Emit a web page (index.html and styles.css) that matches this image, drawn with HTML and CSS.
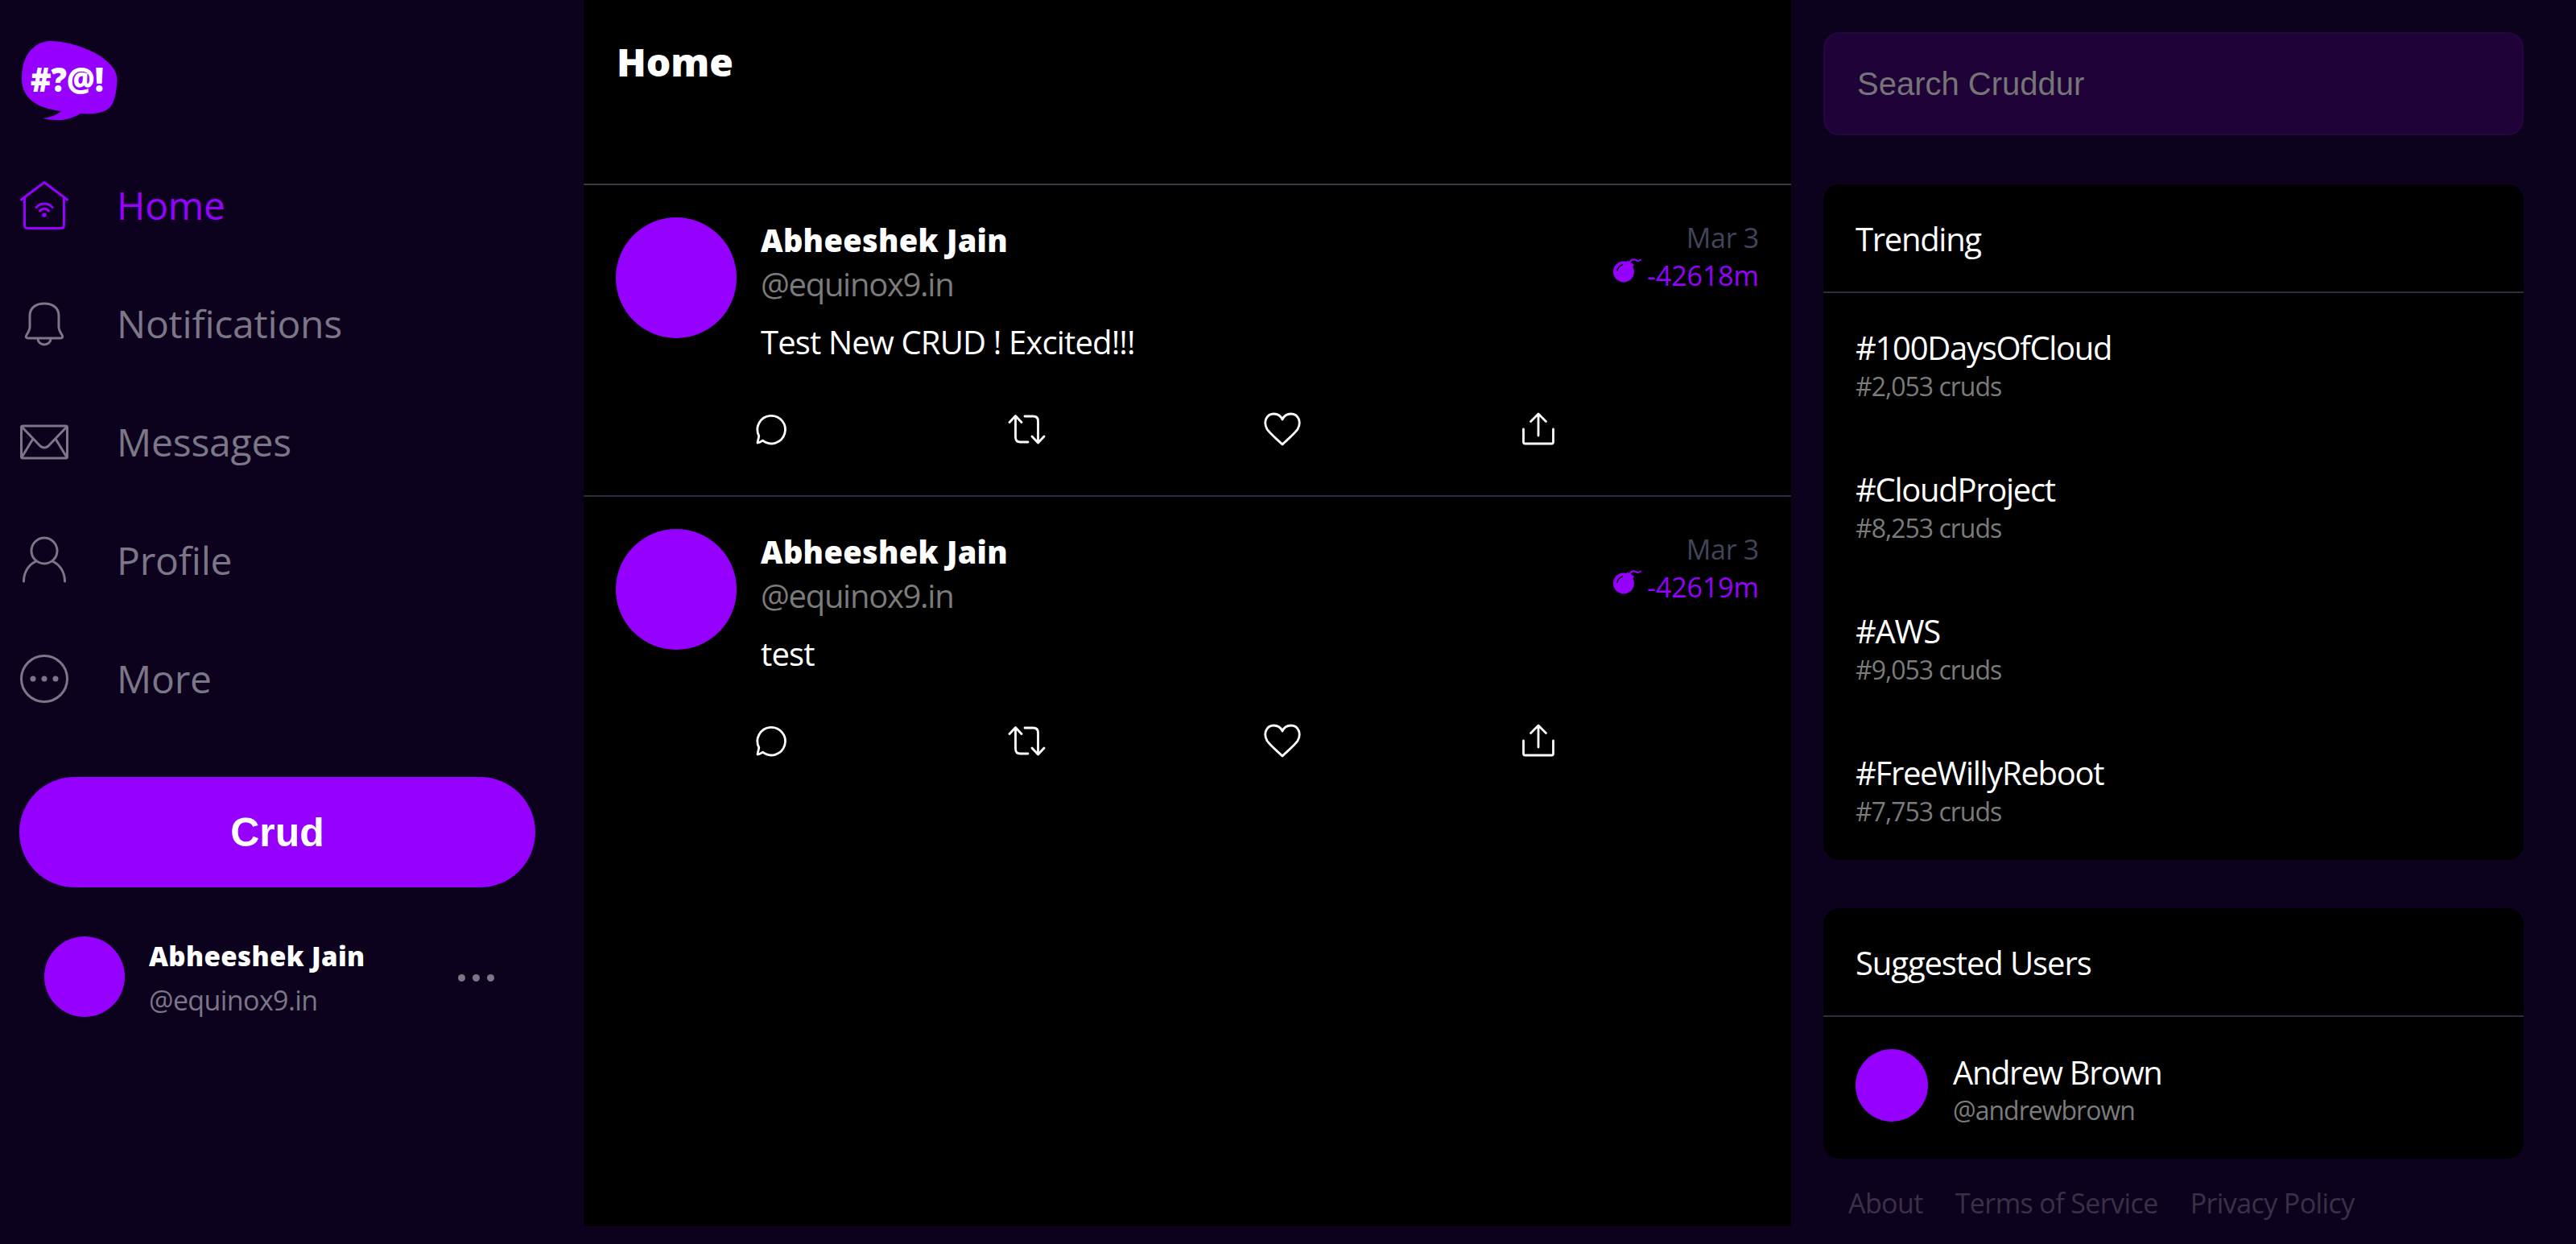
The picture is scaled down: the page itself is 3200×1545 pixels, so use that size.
FILE: index.html
```html
<!DOCTYPE html>
<html lang="en">
<head>
<meta charset="utf-8">
<title>Cruddur</title>
<link rel="stylesheet" href="styles.css">
</head>
<body>
<div class="app">
  <aside class="sidebar">
    <svg class="logo" viewBox="26 50 120 100">
      <path class="fill-purple" d="M63 51C85 51 115 62 128 72C140 81 146 90 145.5 100C145 112 143 122 140 128C136 137 125 143 100 141C92 146 80 150 70 149C63 149 58 148 53 147C62 146 70 143 76 138C60 136 47 132 38 124C30 116 27 108 27 97C27 80 32 66 43 58C49 53 56 51 63 51Z"/>
      <text class="logo-text" x="38" y="114" textLength="91" lengthAdjust="spacingAndGlyphs">#?@!</text>
    </svg>
    <nav class="nav">
      <a class="nav-item active">
        <svg class="nav-icon" viewBox="0 0 60 60"><path d="M1.5 23L30 1.5L58.5 23M5.5 20V54.500Q5.500 58.500 9.500 58.500H50.500Q54.500 58.500 54.500 54.500V20"/><path d="M20 32.500A13.500 13.500 0 0 1 40 32.500M24.500 37A7 7 0 0 1 35.500 37"/><circle class="dot" cx="30" cy="42" r="2.800"/></svg>
        <span>Home</span>
      </a>
      <a class="nav-item">
        <svg class="nav-icon" viewBox="0 0 60 60"><path d="M12 20C12 10 20 5 30 5C40 5 48 10 48 20V34C48 38 50 41 52 44Q54 48 50 48H10Q6 48 8 44C10 41 12 38 12 34Z"/><path d="M22 49A8 7 0 0 0 38 49"/></svg>
        <span>Notifications</span>
      </a>
      <a class="nav-item">
        <svg class="nav-icon" viewBox="0 0 60 60"><rect x="1.500" y="10" width="57" height="40" rx="2"/><path d="M2 11L25 35Q30 39 35 35L58 11M2 49L16 26M58 49L44 26"/></svg>
        <span>Messages</span>
      </a>
      <a class="nav-item">
        <svg class="nav-icon" viewBox="0 0 60 60"><circle cx="30" cy="18" r="16"/><path d="M4.500 56C4.500 44 11 35 20 31M55.500 56C55.500 44 49 35 40 31"/></svg>
        <span>Profile</span>
      </a>
      <a class="nav-item">
        <svg class="nav-icon" viewBox="0 0 60 60"><circle cx="30" cy="30" r="28.500"/><circle class="dot" cx="16" cy="30" r="3.500"/><circle class="dot" cx="30" cy="30" r="3.500"/><circle class="dot" cx="44" cy="30" r="3.500"/></svg>
        <span>More</span>
      </a>
    </nav>
    <button class="crud-button">Crud</button>
    <div class="profile">
      <div class="avatar avatar-side"></div>
      <div class="profile-meta">
        <div class="profile-name">Abheeshek Jain</div>
        <div class="profile-handle">@equinox9.in</div>
      </div>
      <div class="profile-dots"><i></i><i></i><i></i></div>
    </div>
  </aside>

  <main class="feed">
    <header class="feed-header">Home</header>

    <article class="post">
      <div class="avatar avatar-post"></div>
      <div class="post-body">
        <div class="post-top">
          <div>
            <div class="post-name">Abheeshek Jain</div>
            <div class="post-handle">@equinox9.in</div>
          </div>
          <div class="post-time">
            <div class="post-date">Mar 3</div>
            <div class="post-expire">
              <svg class="bomb" viewBox="0 0 35 30"><path class="fill-purple" d="M18 2.500L26 8L24.500 10.500A13 13 0 1 1 16.500 4Z"/><path class="bomb-shine" d="M5 16C5 12 8 9 12 7.500"/><path class="bomb-fuse" d="M21 4C23 0.500 27 1.500 29 2.500C31 3.500 33 2.500 34.500 1.500"/></svg>
              <span>-42618m</span>
            </div>
          </div>
        </div>
        <p class="post-text">Test New CRUD ! Excited!!!</p>
        <div class="post-actions">
          <svg class="action" viewBox="0 0 48 48"><path d="M8 41L9.800 32.500A17.300 17.300 0 1 1 14.500 38.200Q10.500 41 8 41Z"/></svg>
          <svg class="action" viewBox="0 0 48 48"><path d="M3 15.500L10.500 7.500L18 15.500M10.500 8V34Q10.500 40 16.500 40H26M46 33L38.500 41L31 33M38.500 40V14Q38.500 8 32.500 8H22"/></svg>
          <svg class="action" viewBox="0 0 48 48"><path d="M24 43C18 37 9 30 5 24C0 15 4 5 13.500 5C18 5 22 7.500 24 12C26 7.500 30 5 34.500 5C44 5 48 15 43 24C39 30 30 37 24 43Z"/></svg>
          <svg class="action" viewBox="0 0 48 48"><path d="M24 32V5.500M14.500 14.500L24 5L33.500 14.500M5.500 24V40Q5.500 42 7.500 42H40.500Q42.500 42 42.500 40V24"/></svg>
        </div>
      </div>
    </article>

    <article class="post">
      <div class="avatar avatar-post"></div>
      <div class="post-body">
        <div class="post-top">
          <div>
            <div class="post-name">Abheeshek Jain</div>
            <div class="post-handle">@equinox9.in</div>
          </div>
          <div class="post-time">
            <div class="post-date">Mar 3</div>
            <div class="post-expire">
              <svg class="bomb" viewBox="0 0 35 30"><path class="fill-purple" d="M18 2.500L26 8L24.500 10.500A13 13 0 1 1 16.500 4Z"/><path class="bomb-shine" d="M5 16C5 12 8 9 12 7.500"/><path class="bomb-fuse" d="M21 4C23 0.500 27 1.500 29 2.500C31 3.500 33 2.500 34.500 1.500"/></svg>
              <span>-42619m</span>
            </div>
          </div>
        </div>
        <p class="post-text">test</p>
        <div class="post-actions">
          <svg class="action" viewBox="0 0 48 48"><path d="M8 41L9.800 32.500A17.300 17.300 0 1 1 14.500 38.200Q10.500 41 8 41Z"/></svg>
          <svg class="action" viewBox="0 0 48 48"><path d="M3 15.500L10.500 7.500L18 15.500M10.500 8V34Q10.500 40 16.500 40H26M46 33L38.500 41L31 33M38.500 40V14Q38.500 8 32.500 8H22"/></svg>
          <svg class="action" viewBox="0 0 48 48"><path d="M24 43C18 37 9 30 5 24C0 15 4 5 13.500 5C18 5 22 7.500 24 12C26 7.500 30 5 34.500 5C44 5 48 15 43 24C39 30 30 37 24 43Z"/></svg>
          <svg class="action" viewBox="0 0 48 48"><path d="M24 32V5.500M14.500 14.500L24 5L33.500 14.500M5.500 24V40Q5.500 42 7.500 42H40.500Q42.500 42 42.500 40V24"/></svg>
        </div>
      </div>
    </article>
  </main>

  <aside class="widgets">
    <input class="search" type="text" placeholder="Search Cruddur">
    <section class="panel panel-trending">
      <h2 class="panel-title">Trending</h2>
      <div class="trend-list">
        <div class="trend"><div class="trend-tag">#100DaysOfCloud</div><div class="trend-count">#2,053 cruds</div></div>
        <div class="trend"><div class="trend-tag">#CloudProject</div><div class="trend-count">#8,253 cruds</div></div>
        <div class="trend"><div class="trend-tag">#AWS</div><div class="trend-count">#9,053 cruds</div></div>
        <div class="trend"><div class="trend-tag">#FreeWillyReboot</div><div class="trend-count">#7,753 cruds</div></div>
      </div>
    </section>
    <section class="panel panel-suggested">
      <h2 class="panel-title">Suggested Users</h2>
      <div class="suggested">
        <div class="avatar avatar-suggest"></div>
        <div class="suggest-meta">
          <div class="suggest-name">Andrew Brown</div>
          <div class="suggest-handle">@andrewbrown</div>
        </div>
      </div>
    </section>
    <footer class="links"><a>About</a><a>Terms of Service</a><a>Privacy Policy</a></footer>
  </aside>
</div>
</body>
</html>
```

FILE: styles.css
```css
* { box-sizing: border-box; }
html, body { margin: 0; background: #0c021e; }
body { font-family: "Open Sans", "Noto Sans", sans-serif; color: #fff; }
.app { display: flex; height: 1523px; }
.fill-purple { fill: #9500ff; }
.avatar { background: #9500ff; border-radius: 50%; flex: none; }

/* sidebar */
.sidebar { width: 725px; flex: none; padding: 50px 0 0 24px; }
.logo { display: block; width: 120px; height: 100px; margin-left: 2px; }
.logo-text { font-family: "Noto Sans", sans-serif; font-weight: 900; font-size: 42px; fill: #fff; }
.nav { margin-top: 31px; display: flex; flex-direction: column; }
.nav-item { display: flex; align-items: center; height: 147px; gap: 60px; color: #7c7786; font-size: 48px; letter-spacing: -0.2px; }
.nav-item.active { color: #9500ff; }
.nav-icon { width: 60px; height: 60px; margin-left: 1px; fill: none; stroke: currentColor; stroke-width: 3; stroke-linecap: round; stroke-linejoin: round; }
.nav-icon .dot { fill: currentColor; stroke: none; }
.crud-button { display: block; width: 641px; height: 137px; margin-top: 49px; border: 0; border-radius: 69px; background: #9500ff; color: #fff; font-family: "Liberation Sans", Arial, sans-serif; font-weight: 700; font-size: 50px; }
.profile { display: flex; align-items: flex-start; margin: 61px 0 0 31px; width: 569px; }
.avatar-side { width: 100px; height: 100px; }
.profile-meta { margin-left: 30px; flex: 1; }
.profile-name { font-family: "Noto Sans", sans-serif; font-weight: 900; font-size: 33px; line-height: 50px; letter-spacing: 0.4px; }
.profile-handle { color: #7c7786; font-size: 34px; line-height: 58px; letter-spacing: -0.6px; }
.profile-dots { display: flex; gap: 9px; margin: 47px 10px 0 0; }
.profile-dots i { width: 9px; height: 9px; border-radius: 50%; background: #7c7786; }

/* feed */
.feed { width: 1500px; flex: none; background: #000; }
.feed-header { height: 230px; padding: 44px 0 0 41px; border-bottom: 2px solid #3a3a48; font-family: "Noto Sans", sans-serif; font-weight: 900; font-size: 48px; line-height: 66px; }
.post { display: flex; gap: 30px; height: 387px; padding: 40px 40px 0; border-bottom: 2px solid #2b2e3c; }
.post:last-child { border-bottom: 0; }
.avatar-post { width: 150px; height: 150px; }
.post-body { flex: 1; min-width: 0; }
.post-top { display: flex; justify-content: space-between; }
.post-name { font-family: "Noto Sans", sans-serif; font-weight: 900; font-size: 38px; line-height: 56px; letter-spacing: 0.3px; }
.post-handle { color: #7b7b7b; font-size: 40px; line-height: 54px; letter-spacing: -1.3px; }
.post-time { text-align: right; font-size: 34px; line-height: 45px; padding-top: 3px; letter-spacing: -0.3px; }
.post-date { color: #41455a; }
.post-expire { display: flex; justify-content: flex-end; align-items: flex-start; gap: 7px; color: #9500ff; line-height: 48px; letter-spacing: -0.1px; }
.bomb { width: 35px; height: 30px; margin-top: 3px; }
.bomb-shine { fill: none; stroke: #000; stroke-width: 1.500; }
.bomb-fuse { fill: none; stroke: #9500ff; stroke-width: 2; stroke-linecap: round; }
.post-text { margin: 17px 0 0; font-size: 40px; line-height: 56px; letter-spacing: -0.85px; }
.post-actions { display: flex; gap: 270px; margin: 56px 0 0 -12px; }
.action { width: 48px; height: 48px; fill: none; stroke: #fff; stroke-width: 2.800; stroke-linecap: round; stroke-linejoin: round; }

/* widgets */
.widgets { width: 870px; flex: none; margin-left: 40px; padding-top: 40px; }
.search { display: block; width: 100%; height: 128px; padding: 0 40px; border: 2px solid #250740; border-radius: 20px; background: #1f0238; color: #fff; font-family: "Liberation Sans", Arial, sans-serif; font-size: 40px; outline: none; }
.search::placeholder { color: #757575; opacity: 1; }
.panel { background: #000; border-radius: 20px; }
.panel-trending { margin-top: 61px; height: 839px; }
.panel-suggested { margin-top: 60px; height: 311px; }
.panel-title { margin: 0; height: 135px; padding: 2px 40px 0; display: flex; align-items: center; border-bottom: 2px solid #2b2e3c; font-size: 40px; font-weight: 400; letter-spacing: -1.3px; }
.panel-suggested .panel-title { letter-spacing: -1.1px; }
.trend-list { padding: 25px 40px 0; }
.trend { height: 176px; padding-top: 15px; }
.trend-tag { font-size: 40px; line-height: 56px; letter-spacing: -1.3px; }
.trend-count { color: #7b7b7b; font-size: 32px; line-height: 40px; letter-spacing: -1px; }
.suggested { display: flex; align-items: flex-start; gap: 31px; padding: 40px 40px 0; }
.suggest-meta { margin-top: 2px; }
.avatar-suggest { width: 90px; height: 90px; }
.suggest-name { font-size: 40px; line-height: 54px; letter-spacing: -1.4px; }
.suggest-handle { color: #7b7b7b; font-size: 32px; line-height: 40px; letter-spacing: -1px; }
.links { display: flex; gap: 40px; margin-top: 28px; padding-left: 31px; color: #3b3048; font-size: 34px; line-height: 54px; letter-spacing: -0.6px; }
```
